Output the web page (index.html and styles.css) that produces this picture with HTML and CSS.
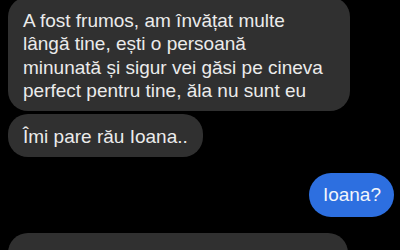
FILE: index.html
```html
<!DOCTYPE html>
<html lang="ro">
<head>
    <meta charset="UTF-8">
    <meta name="viewport" content="width=device-width, initial-scale=1.0">
    <title>Conversație</title>
    <link rel="stylesheet" href="styles.css">
</head>
<body>
    <div class="chat">
        <div class="msg in first">A fost frumos, am învățat multe lângă tine, ești o persoană minunată și sigur vei găsi pe cineva perfect pentru tine, ăla nu sunt eu</div>
        <div class="msg in">Îmi pare rău Ioana..</div>
        <div class="msg out">Ioana?</div>
        <div class="msg in last">Acum sunt cu Mariana, nu mai pot sta cu tine</div>
    </div>
</body>
</html>
```

FILE: styles.css
```css
body {
    margin: 0;
    background: #000;
    font-family: 'Liberation Sans', Arial, sans-serif;
    overflow: hidden;
}

.chat {
    display: flex;
    flex-direction: column;
    align-items: flex-start;
    padding: 0 6px 0 8px;
    margin-top: -3px;
}

.msg {
    box-sizing: border-box;
    font-size: 19px;
    line-height: 23.3px;
    color: #ebebeb;
    padding: 11px 15px 9px;
    border-radius: 20px;
}

.msg.in {
    background: #303030;
}

.msg.first {
    width: 342px;
    padding: 12px 25px 9px 15px;
    margin-bottom: 3px;
}

.msg.out {
    align-self: flex-end;
    background: #2d6fe0;
    color: #f2f5fb;
    border-radius: 22px;
    padding: 10px 13px 10px 14px;
    margin: 16px 0;
}

.msg.last {
    width: 340px;
    padding-top: 13px;
}
```
